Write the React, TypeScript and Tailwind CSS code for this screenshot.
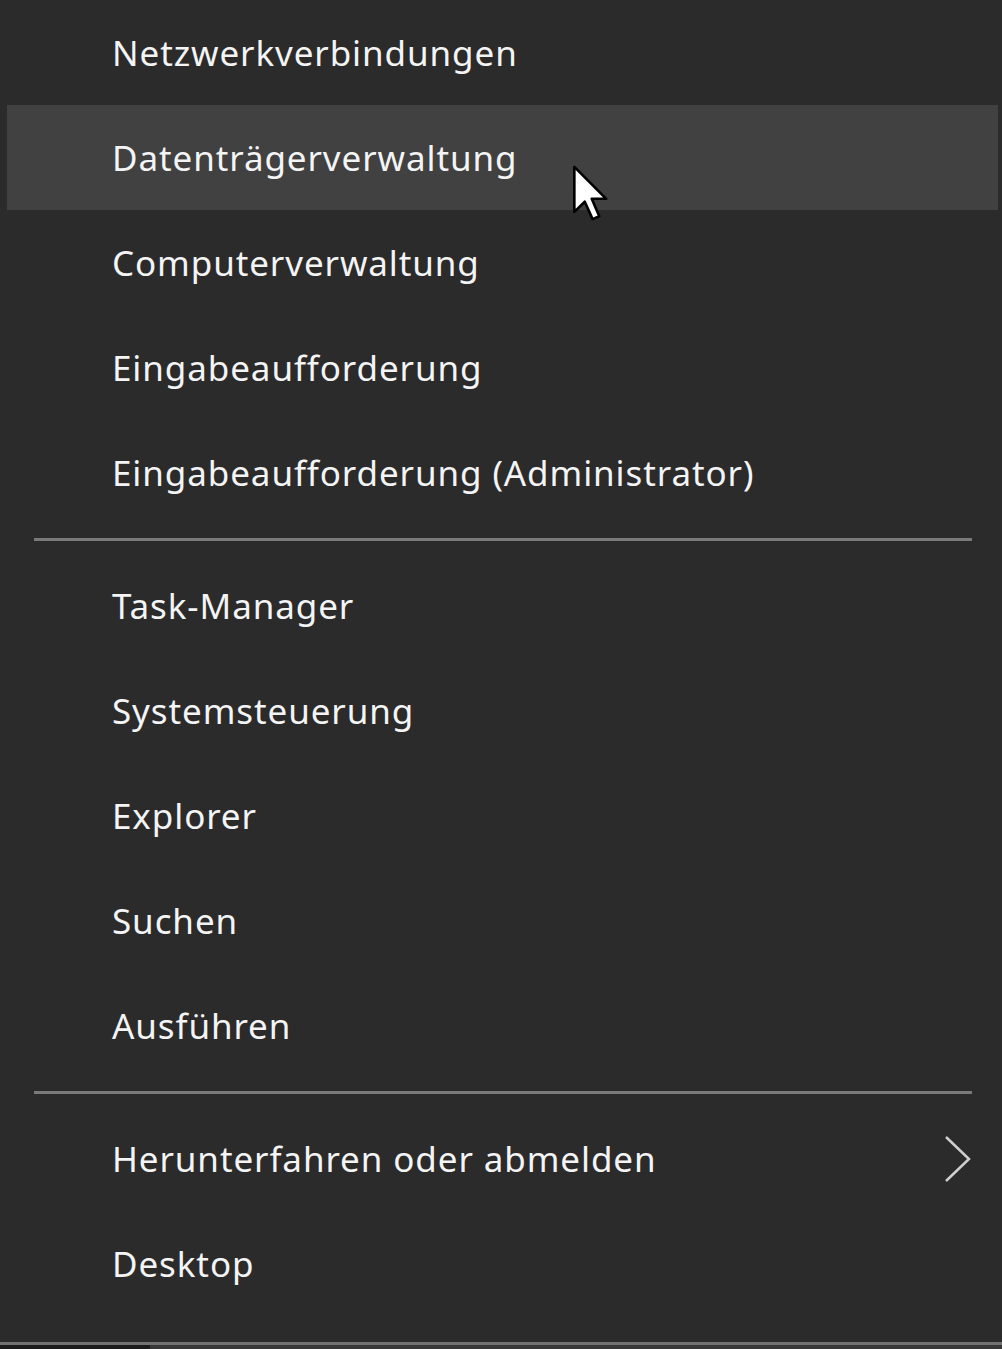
import React from "react"

type Item = { label: string; hover?: boolean; submenu?: boolean }

const groups: Item[][] = [
  [
    { label: "Netzwerkverbindungen" },
    { label: "Datenträgerverwaltung", hover: true },
    { label: "Computerverwaltung" },
    { label: "Eingabeaufforderung" },
    { label: "Eingabeaufforderung (Administrator)" },
  ],
  [
    { label: "Task-Manager" },
    { label: "Systemsteuerung" },
    { label: "Explorer" },
    { label: "Suchen" },
    { label: "Ausführen" },
  ],
  [{ label: "Herunterfahren oder abmelden", submenu: true }, { label: "Desktop" }],
]

function MenuRow({ item }: { item: Item }) {
  return (
    <div
      className={`relative flex h-[105px] items-center justify-between pl-[105px] pr-[26px] ${
        item.hover ? "bg-[#414141]" : ""
      }`}
    >
      <span className="text-[35px] leading-none tracking-[0.9px] text-[#f4f4f4]">{item.label}</span>
      {item.submenu && (
        <svg width="28" height="48" viewBox="0 0 28 48" fill="none">
          <polyline points="2,2 25,24 2,46" stroke="#cfcfcf" strokeWidth="2.5" />
        </svg>
      )}
      {item.hover && (
        <svg
          className="absolute left-[564px] top-[59px]"
          width="40"
          height="58"
          viewBox="0 0 13.5 20"
        >
          <path
            d="M1 1 L1 16.5 L4.6 13 L7.3 19 L9.6 18 L7 12 L12 12 Z"
            fill="#ffffff"
            stroke="#000000"
            strokeWidth="0.9"
            strokeLinejoin="round"
          />
        </svg>
      )}
    </div>
  )
}

export default function App() {
  return (
    <div
      className="flex h-[1349px] w-[1002px] flex-col overflow-hidden bg-[#2b2b2b]"
      style={{ fontFamily: '"Noto Sans", "Open Sans", sans-serif' }}
    >
      <div className="flex flex-1 flex-col pl-[7px] pr-[4px]">
        {groups.map((group, gi) => (
          <div key={gi}>
            {gi > 0 && (
              <div className="flex h-[28px] items-center pl-[27px] pr-[26px]">
                <div className="h-[3px] w-full bg-[#7a7a7a]" />
              </div>
            )}
            {group.map((item) => (
              <MenuRow key={item.label} item={item} />
            ))}
          </div>
        ))}
      </div>
      <div className="h-[3px] w-full bg-[#727272]" />
      <div className="flex h-[4px] w-full">
        <div className="w-[150px] bg-[#1c1c1c]" />
        <div className="flex-1 bg-[#383838]" />
      </div>
    </div>
  )
}
